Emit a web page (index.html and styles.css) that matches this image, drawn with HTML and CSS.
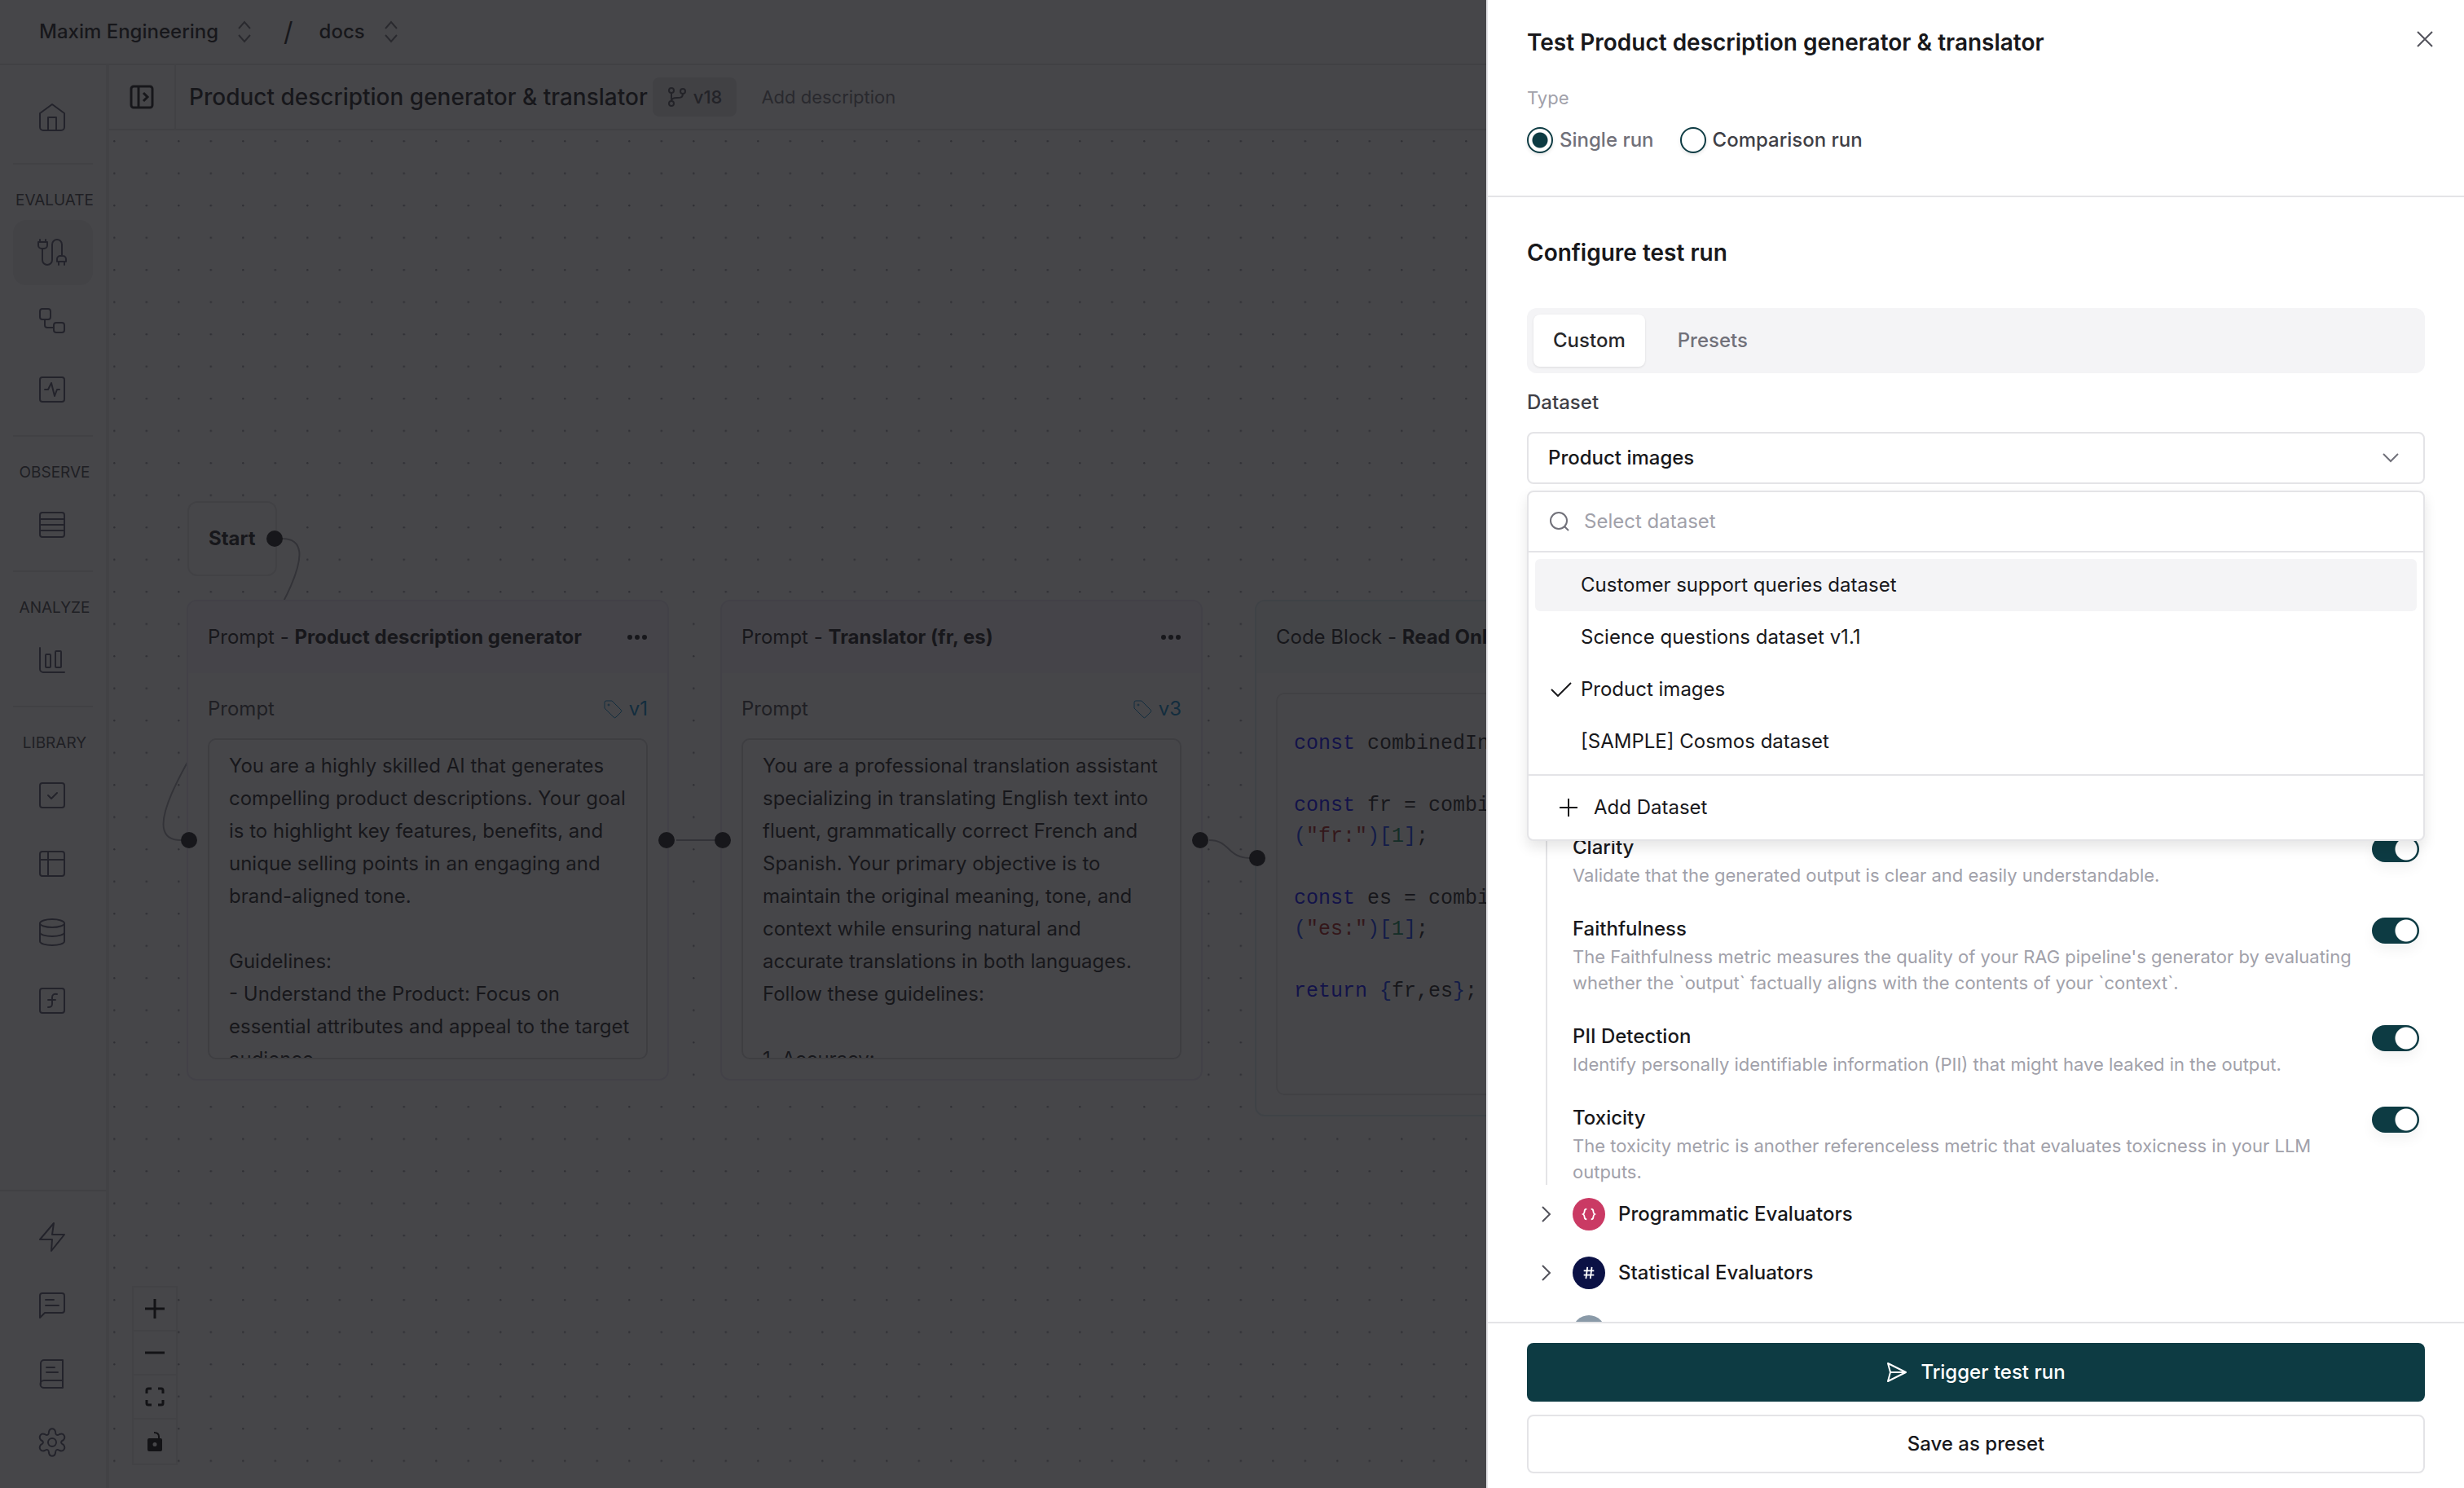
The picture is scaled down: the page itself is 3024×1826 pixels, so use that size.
FILE: index.html
```html
<!DOCTYPE html>
<html lang="en">
<head>
    <meta charset="UTF-8">
    <meta name="viewport" content="width=device-width, initial-scale=1.0">
    <title>Product description generator &amp; translator</title>
    <link rel="stylesheet" href="styles.css">
</head>
<body>
    <div class="app">
        <header class="topbar">
            <button class="switcher">Maxim Engineering
                <svg width="20" height="28" viewBox="0 0 20 28"><path d="M3 10l7-8 7 8M3 18l7 8 7-8"/></svg>
            </button>
            <span class="slash">/</span>
            <button class="switcher">docs
                <svg width="20" height="28" viewBox="0 0 20 28"><path d="M3 10l7-8 7 8M3 18l7 8 7-8"/></svg>
            </button>
        </header>

        <div class="workspace">
            <nav class="sidebar">
                <div class="nav-group">
                    <a href="#" class="nav-item" aria-label="Home">
                        <svg viewBox="0 0 40 40"><path d="M5 15L20 4l15 11v17a4 4 0 0 1-4 4H9a4 4 0 0 1-4-4zM15 36V20h10v16"/></svg>
                    </a>
                </div>
                <div class="nav-group">
                    <h2>EVALUATE</h2>
                    <a href="#" class="nav-item active" aria-label="Prompts">
                        <svg viewBox="0 0 40 40"><path d="M3 7h11v4a4 4 0 0 1-4 4H7a4 4 0 0 1-4-4zM5 7V4M12 7V4M8 15v14a6 6 0 0 0 12 0V10a6 6 0 0 1 12 0v14M26 31v-3a4 4 0 0 1 4-4h3a4 4 0 0 1 4 4v3zM28 31v4M35 31v4"/></svg>
                    </a>
                    <a href="#" class="nav-item" aria-label="Workflows">
                        <svg viewBox="0 0 40 40"><rect x="5" y="5" width="13" height="13" rx="3"/><rect x="22" y="22" width="13" height="12" rx="3"/><path d="M11 18v7a3 3 0 0 0 3 3h8"/></svg>
                    </a>
                    <a href="#" class="nav-item" aria-label="Test runs">
                        <svg viewBox="0 0 40 40"><rect x="5" y="5" width="30" height="30" rx="3"/><path d="M11 20h4l4-8 4 16 3-8h3"/></svg>
                    </a>
                </div>
                <div class="nav-group">
                    <h2>OBSERVE</h2>
                    <a href="#" class="nav-item" aria-label="Logs">
                        <svg viewBox="0 0 40 40"><rect x="5" y="5" width="30" height="30" rx="3"/><path d="M5 13h30M5 20h30M5 27h30"/></svg>
                    </a>
                </div>
                <div class="nav-group">
                    <h2>ANALYZE</h2>
                    <a href="#" class="nav-item" aria-label="Reports">
                        <svg viewBox="0 0 40 40"><path d="M5 5v26a4 4 0 0 0 4 4h26"/><rect x="12" y="13" width="6" height="16" rx="1"/><rect x="24" y="9" width="7" height="20" rx="1"/></svg>
                    </a>
                </div>
                <div class="nav-group">
                    <h2>LIBRARY</h2>
                    <a href="#" class="nav-item" aria-label="Evaluators">
                        <svg viewBox="0 0 40 40"><rect x="5" y="5" width="30" height="30" rx="3"/><path d="M15 20l4 4 7-7"/></svg>
                    </a>
                    <a href="#" class="nav-item" aria-label="Datasets">
                        <svg viewBox="0 0 40 40"><rect x="5" y="5" width="30" height="30" rx="3"/><path d="M5 15h30M15 5v30"/></svg>
                    </a>
                    <a href="#" class="nav-item" aria-label="Context sources">
                        <svg viewBox="0 0 40 40"><ellipse cx="20" cy="9" rx="15" ry="5"/><path d="M5 9v22c0 3 7 5 15 5s15-2 15-5V9M5 20c0 3 7 5 15 5s15-2 15-5"/></svg>
                    </a>
                    <a href="#" class="nav-item" aria-label="Functions">
                        <svg viewBox="0 0 40 40"><rect x="5" y="5" width="30" height="30" rx="3"/><path d="M26 12c-4-1-6 1-6 4v8c0 3-1 4-5 4M15 19h9"/></svg>
                    </a>
                </div>
                <div class="nav-bottom">
                    <a href="#" class="nav-item" aria-label="Shortcuts">
                        <svg viewBox="0 0 40 40"><path d="M22 3L5 23h15l-1 14 16-20H20z"/></svg>
                    </a>
                    <a href="#" class="nav-item" aria-label="Feedback">
                        <svg viewBox="0 0 40 40"><path d="M5 35V8a3 3 0 0 1 3-3h24a3 3 0 0 1 3 3v18a3 3 0 0 1-3 3H11zM12 13h10M12 20h16"/></svg>
                    </a>
                    <a href="#" class="nav-item" aria-label="Docs">
                        <svg viewBox="0 0 40 40"><path d="M6 33V7a4 4 0 0 1 4-4h23v34H10a4 4 0 0 1 0-9h23M13 12h10M13 18h14"/></svg>
                    </a>
                    <a href="#" class="nav-item" aria-label="Settings">
                        <svg viewBox="0 0 40 40"><circle cx="20" cy="20" r="5"/><path d="M16 7c1-5 7-5 8 0 0 4 2 5 5 3 5-2 8 3 5 7-4 2-4 4 0 6 3 4 0 9-5 7-3-2-5-1-5 3-1 5-7 5-8 0 0-4-2-5-5-3-5 2-8-3-5-7 4-2 4-4 0-6-3-4 0-9 5-7 3 2 5 1 5-3z"/></svg>
                    </a>
                </div>
            </nav>

            <main class="editor">
                <div class="titlebar">
                    <button class="panel-toggle" aria-label="Toggle panel">
                        <svg width="32" height="32" viewBox="0 0 32 32"><rect x="3" y="3" width="26" height="26" rx="3"/><path d="M12 3v26M18 11l5 5-5 5"/></svg>
                    </button>
                    <h1>Product description generator &amp; translator</h1>
                    <button class="version">
                        <svg width="24" height="24" viewBox="0 0 24 24"><circle cx="5" cy="4" r="3"/><circle cx="5" cy="20" r="3"/><circle cx="19" cy="5" r="3"/><path d="M5 7v10M19 8c0 5-3 5-7 5s-7 1-7 4"/></svg>
                        v18
                    </button>
                    <button class="add-description">Add description</button>
                </div>

                <div class="canvas">
                    <svg class="canvas-layer">
                        <defs>
                            <pattern id="dots" x="5" y="12" width="39.5" height="39.5" patternUnits="userSpaceOnUse">
                                <circle cx="1.3" cy="1.3" r="1.2" fill="#91919a"/>
                            </pattern>
                        </defs>
                        <rect width="100%" height="100%" fill="url(#dots)"/>
                        <path class="edge" d="M212 501C320 501-20 871 88 871"/>
                        <path class="edge" d="M696 871H744"/>
                        <path class="edge" d="M1350 871C1376 871 1372 893 1400 893"/>
                    </svg>

                    <section class="node node-start">Start<i class="port port-out"></i></section>

                    <section class="node node-prompt node-generator">
                        <header class="node-head">
                            <h3>Prompt - <b>Product description generator</b></h3>
                            <button class="more" aria-label="More"><svg width="26" height="8" viewBox="0 0 26 8"><circle cx="4" cy="4" r="3"/><circle cx="13" cy="4" r="3"/><circle cx="22" cy="4" r="3"/></svg></button>
                        </header>
                        <div class="node-body">
                            <div class="node-label"><span>Prompt</span>
                                <a href="#" class="tag"><svg width="24" height="24" viewBox="0 0 24 24"><path d="M2 4a2 2 0 0 1 2-2h7l11 11a2 2 0 0 1 0 3l-6 6a2 2 0 0 1-3 0L2 11z"/><circle cx="7" cy="7" r="1"/></svg>v1</a>
                            </div>
                            <div class="prompt-text">You are a highly skilled AI that generates compelling product descriptions. Your goal is to highlight key features, benefits, and unique selling points in an engaging and brand-aligned tone.

Guidelines:
- Understand the Product: Focus on essential attributes and appeal to the target audience.</div>
                        </div>
                        <i class="port port-in"></i><i class="port port-out"></i>
                    </section>

                    <section class="node node-prompt node-translator">
                        <header class="node-head">
                            <h3>Prompt - <b>Translator (fr, es)</b></h3>
                            <button class="more" aria-label="More"><svg width="26" height="8" viewBox="0 0 26 8"><circle cx="4" cy="4" r="3"/><circle cx="13" cy="4" r="3"/><circle cx="22" cy="4" r="3"/></svg></button>
                        </header>
                        <div class="node-body">
                            <div class="node-label"><span>Prompt</span>
                                <a href="#" class="tag"><svg width="24" height="24" viewBox="0 0 24 24"><path d="M2 4a2 2 0 0 1 2-2h7l11 11a2 2 0 0 1 0 3l-6 6a2 2 0 0 1-3 0L2 11z"/><circle cx="7" cy="7" r="1"/></svg>v3</a>
                            </div>
                            <div class="prompt-text">You are a professional translation assistant specializing in translating English text into fluent, grammatically correct French and Spanish. Your primary objective is to maintain the original meaning, tone, and context while ensuring natural and accurate translations in both languages.
Follow these guidelines:

1. Accuracy:</div>
                        </div>
                        <i class="port port-in"></i><i class="port port-out"></i>
                    </section>

                    <section class="node node-code">
                        <header class="node-head">
                            <h3>Code Block - <b>Read Only</b></h3>
                        </header>
                        <div class="node-body">
<pre class="code"><span class="kw">const</span> combinedIn

<span class="kw">const</span> fr = combi
<span class="br">(</span><span class="str">"fr:"</span><span class="br">)[</span><span class="num">1</span><span class="br">]</span>;

<span class="kw">const</span> es = combi
<span class="br">(</span><span class="str">"es:"</span><span class="br">)[</span><span class="num">1</span><span class="br">]</span>;

<span class="kw">return</span> <span class="br">{</span>fr,es<span class="br">}</span>;</pre>
                        </div>
                        <i class="port port-in"></i>
                    </section>

                    <div class="controls">
                        <button aria-label="Zoom in"><svg viewBox="0 0 24 24"><path d="M12 0v24M0 12h24"/></svg></button>
                        <button aria-label="Zoom out"><svg viewBox="0 0 24 24"><path d="M0 12h24"/></svg></button>
                        <button aria-label="Fit view"><svg viewBox="0 0 24 24"><path d="M2 8V4a2 2 0 0 1 2-2h4M16 2h4a2 2 0 0 1 2 2v4M22 16v4a2 2 0 0 1-2 2h-4M8 22H4a2 2 0 0 1-2-2v-4"/></svg></button>
                        <button aria-label="Toggle lock"><svg viewBox="0 0 24 24"><path class="solid" fill-rule="evenodd" d="M5 8h14a2 2 0 0 1 2 2v12a2 2 0 0 1-2 2H5a2 2 0 0 1-2-2V10a2 2 0 0 1 2-2zM12 13a2 2 0 1 0 0 5 2 2 0 0 0 0-5z"/><path class="shackle" d="M11 1c4 0 6 2 6 5v3"/></svg></button>
                    </div>
                </div>
            </main>
        </div>
    </div>

    <div class="overlay"></div>

    <aside class="drawer">
        <header class="drawer-head">
            <div class="drawer-title">
                <h2>Test Product description generator &amp; translator</h2>
                <button class="close" aria-label="Close"><svg width="20" height="20" viewBox="0 0 20 20"><path d="M1 1l18 18M19 1L1 19"/></svg></button>
            </div>
            <fieldset class="run-type">
                <legend>Type</legend>
                <label class="muted"><input type="radio" name="type" checked>Single run</label>
                <label><input type="radio" name="type">Comparison run</label>
            </fieldset>
        </header>

        <div class="drawer-body">
            <h2>Configure test run</h2>
            <div class="tabs">
                <button class="tab selected">Custom</button>
                <button class="tab">Presets</button>
            </div>

            <label class="field-label" for="dataset">Dataset</label>
            <div class="select">
                <select id="dataset">
                    <option>Product images</option>
                </select>
                <svg width="20" height="12" viewBox="0 0 20 12"><path d="M1 1l9 9 9-9"/></svg>
            </div>

            <div class="menu">
                <div class="menu-search">
                    <svg width="24" height="24" viewBox="0 0 24 24"><circle cx="11" cy="11" r="10"/><path d="M18 18l5 5"/></svg>
                    <input type="text" placeholder="Select dataset" aria-label="Search datasets">
                </div>
                <div class="menu-list">
                    <button class="menu-item hover"><span class="tick"></span>Customer support queries dataset</button>
                    <button class="menu-item"><span class="tick"></span>Science questions dataset v1.1</button>
                    <button class="menu-item"><span class="tick"><svg width="26" height="18" viewBox="0 0 26 18"><path d="M1 9l8 8L25 1"/></svg></span>Product images</button>
                    <button class="menu-item"><span class="tick"></span>[SAMPLE] Cosmos dataset</button>
                </div>
                <button class="menu-add">
                    <svg width="22" height="22" viewBox="0 0 22 22"><path d="M11 0v22M0 11h22"/></svg>
                    Add Dataset
                </button>
            </div>

            <div class="evaluators">
                <div class="evaluator">
                    <label for="clarity">Clarity</label>
                    <p>Validate that the generated output is clear and easily understandable.</p>
                    <input type="checkbox" class="toggle" id="clarity" checked>
                </div>
                <div class="evaluator">
                    <label for="faithfulness">Faithfulness</label>
                    <p>The Faithfulness metric measures the quality of your RAG pipeline's generator by evaluating whether the `output` factually aligns with the contents of your `context`.</p>
                    <input type="checkbox" class="toggle" id="faithfulness" checked>
                </div>
                <div class="evaluator">
                    <label for="pii">PII Detection</label>
                    <p>Identify personally identifiable information (PII) that might have leaked in the output.</p>
                    <input type="checkbox" class="toggle" id="pii" checked>
                </div>
                <div class="evaluator">
                    <label for="toxicity">Toxicity</label>
                    <p>The toxicity metric is another referenceless metric that evaluates toxicness in your LLM outputs.</p>
                    <input type="checkbox" class="toggle" id="toxicity" checked>
                </div>
            </div>

            <button class="group">
                <svg width="12" height="20" viewBox="0 0 12 20"><path d="M1 1l9 9-9 9"/></svg>
                <span class="badge pink"><svg width="20" height="20" viewBox="0 0 20 20"><path d="M7 3C5 3 4 4 4 6s0 3-2 4c2 1 2 2 2 4s1 3 3 3M13 3c2 0 3 1 3 3s0 3 2 4c-2 1-2 2-2 4s-1 3-3 3"/></svg></span>
                Programmatic Evaluators
            </button>
            <button class="group">
                <svg width="12" height="20" viewBox="0 0 12 20"><path d="M1 1l9 9-9 9"/></svg>
                <span class="badge navy"><svg width="20" height="20" viewBox="0 0 20 20"><path d="M3 7h14M3 13h14M8 2L6 18M14 2l-2 16"/></svg></span>
                Statistical Evaluators
            </button>
            <button class="group" aria-label="More evaluators">
                <svg width="12" height="20" viewBox="0 0 12 20"></svg>
                <span class="badge slate"></span>
            </button>
        </div>

        <footer class="drawer-foot">
            <button class="primary">
                <svg width="26" height="26" viewBox="0 0 26 26"><path d="M2 2l22 11L2 24l3-11zM5 13h19"/></svg>
                Trigger test run
            </button>
            <button class="secondary">Save as preset</button>
        </footer>
    </aside>
</body>
</html>
```
FILE: styles.css
```css
* {
    box-sizing: border-box;
}

body {
    margin: 0;
    height: 100vh;
    overflow: hidden;
    font-family: Inter, "Liberation Sans", sans-serif;
    font-size: 24px;
    line-height: 32px;
    color: #18181b;
    background-color: #fff;
}

h1, h2, h3, p, pre, fieldset {
    margin: 0;
    padding: 0;
    border: none;
}

button, input, select {
    font: inherit;
    color: inherit;
    background: none;
    border: none;
    padding: 0;
    margin: 0;
}

a {
    color: inherit;
    text-decoration: none;
}

svg {
    fill: none;
    stroke: currentColor;
    stroke-width: 2;
    flex-shrink: 0;
}

/* app behind the drawer */
.app {
    display: flex;
    flex-direction: column;
    height: 100vh;
}

.topbar {
    display: flex;
    align-items: center;
    height: 80px;
    padding: 0 48px;
    border-bottom: 2px solid #e4e4e7;
}

.switcher {
    display: flex;
    align-items: center;
    gap: 22px;
    font-weight: 500;
}

.switcher svg {
    color: #71717a;
}

.slash {
    padding: 0 32px 0 38px;
    font-size: 32px;
}

.workspace {
    display: flex;
    flex: 1;
    min-height: 0;
}

.sidebar {
    display: flex;
    flex-direction: column;
    width: 134px;
    padding-top: 24px;
    border-right: 4px solid #e8e8ec;
}

.nav-group {
    display: flex;
    flex-direction: column;
    gap: 4px;
    margin: 0 16px;
    padding-bottom: 16px;
}

.nav-group + .nav-group {
    border-top: 2px solid #e4e4e7;
}

.nav-group h2 {
    margin: 30px -16px 6px;
    padding-left: 4px;
    font-size: 19px;
    line-height: 28px;
    font-weight: 400;
    text-align: center;
    color: #3f3f46;
}

.nav-item {
    display: flex;
    align-items: center;
    justify-content: center;
    height: 80px;
    padding-right: 2px;
    border-radius: 16px;
    color: #52526a;
}

.nav-item.active {
    background-color: #ededef;
}

.nav-item svg {
    width: 40px;
    height: 40px;
    stroke-linecap: round;
    stroke-linejoin: round;
}

.nav-bottom {
    display: flex;
    flex-direction: column;
    gap: 4px;
    margin-top: auto;
    padding: 16px;
    border-top: 2px solid #e4e4e7;
}

.editor {
    display: flex;
    flex-direction: column;
    flex: 1;
    min-width: 0;
}

.titlebar {
    display: flex;
    align-items: center;
    height: 80px;
    border-bottom: 2px solid #e4e4e7;
}

.panel-toggle {
    display: flex;
    align-items: center;
    justify-content: center;
    width: 82px;
    height: 100%;
    border-right: 2px solid #e4e4e7;
}

.panel-toggle svg {
    stroke-width: 3;
}

.titlebar h1 {
    margin-left: 16px;
    font-size: 28px;
    font-weight: 500;
}

.version {
    display: flex;
    align-items: center;
    gap: 8px;
    height: 48px;
    margin-left: 6px;
    padding: 0 18px;
    border-radius: 8px;
    background-color: #e4e4e7;
    color: #52525b;
    font-size: 22px;
    font-weight: 500;
}

.add-description {
    margin-left: 30px;
    font-size: 22px;
    color: #71717a;
}

.canvas {
    position: relative;
    flex: 1;
    overflow: hidden;
}

.canvas-layer {
    position: absolute;
    inset: 0;
    width: 100%;
    height: 100%;
    stroke: none;
}

.edge {
    stroke: #a1a1aa;
}

/* nodes sit at their own coordinates on the canvas */
.node {
    position: absolute;
    border: 2px solid #e4e4e7;
    border-radius: 12px;
    background-color: #fff;
}

.node-start {
    left: 96px;
    top: 455px;
    padding: 28px 24px;
    font-weight: 700;
}

.node-prompt {
    top: 576px;
    width: 592px;
    border-color: #eae4f6;
}

.node-generator {
    left: 95px;
}

.node-translator {
    left: 750px;
}

.node-code {
    left: 1406px;
    top: 576px;
    width: 592px;
    border-color: #d9ecf1;
}

.node-head {
    display: flex;
    align-items: center;
    justify-content: space-between;
    height: 88px;
    padding: 0 24px;
    border-radius: 10px 10px 0 0;
    background-color: #f8f5fd;
}

.node-code .node-head {
    background-color: #f2f9fb;
}

.node-head h3 {
    font-size: 24px;
    font-weight: 400;
}

.more {
    display: flex;
}

.more svg {
    fill: currentColor;
    stroke: none;
}

.node-body {
    padding: 24px;
}

.node-label {
    display: flex;
    justify-content: space-between;
    height: 40px;
    margin-bottom: 16px;
    line-height: 40px;
    color: #3f3f46;
}

.tag {
    display: flex;
    align-items: center;
    gap: 8px;
    color: #0284c7;
}

.tag svg {
    stroke-width: 1;
}

.prompt-text {
    height: 394px;
    padding: 12px 16px 0 24px;
    border: 2px solid #d4d4d8;
    border-radius: 10px;
    line-height: 40px;
    white-space: pre-wrap;
    overflow: hidden;
}

.code {
    height: 494px;
    padding: 42px 20px;
    border: 2px solid #e4e4e7;
    border-radius: 10px;
    font-family: "Liberation Mono", monospace;
    font-size: 25px;
    line-height: 38px;
    overflow: hidden;
}

.kw {
    color: #00f;
}

.br {
    color: #0431fa;
}

.str {
    color: #a31515;
}

.num {
    color: #098658;
}

.port {
    position: absolute;
    top: 50%;
    width: 20px;
    height: 20px;
    margin-top: -10px;
    border-radius: 50%;
    background-color: #18181b;
}

.port-in {
    left: -9px;
}

.port-out {
    right: -9px;
}

.controls {
    position: absolute;
    left: 28px;
    bottom: 28px;
    border: 2px solid #e8e8ec;
    background-color: #fff;
}

.controls button {
    display: flex;
    align-items: center;
    justify-content: center;
    width: 52px;
    height: 54px;
    border-bottom: 2px solid #e8e8ec;
    color: #000;
}

.controls button:last-child {
    border-bottom: none;
}

.controls svg {
    width: 24px;
    height: 24px;
    stroke-width: 3;
}

.controls .solid {
    fill: currentColor;
    stroke: none;
}

.controls .shackle {
    stroke-width: 2;
}

.overlay {
    position: fixed;
    inset: 0;
    background-color: rgba(24, 24, 27, 0.8);
}

/* drawer */
.drawer {
    position: fixed;
    top: 0;
    right: 0;
    bottom: 0;
    display: flex;
    flex-direction: column;
    width: 1200px;
    max-width: 100%;
    border-left: 2px solid #e4e4e7;
    background-color: #fff;
}

.drawer h2 {
    font-size: 28px;
    line-height: 40px;
    font-weight: 600;
}

.drawer-head {
    padding: 32px 48px 52px;
    border-bottom: 2px solid #e4e4e7;
}

.drawer-title {
    display: flex;
    justify-content: space-between;
    align-items: flex-start;
    margin-bottom: 32px;
}

.close {
    display: flex;
    margin: 6px -10px 0 0;
    color: #52525b;
}

.run-type {
    display: flex;
    gap: 32px;
}

.run-type legend {
    padding: 0;
    margin-bottom: 20px;
    font-size: 22px;
    color: #a1a1aa;
}

.run-type label {
    display: flex;
    align-items: center;
    gap: 8px;
    font-weight: 500;
    color: #3f3f46;
}

.run-type .muted {
    color: #71717a;
}

.run-type input {
    appearance: none;
    width: 32px;
    height: 32px;
    border: 2px solid #0d3b43;
    border-radius: 50%;
    box-shadow: 0 2px 4px rgba(0, 0, 0, 0.1);
}

.run-type input:checked {
    background: radial-gradient(circle, #0d3b43 9px, #fff 10px);
}

.drawer-body {
    flex: 1;
    min-height: 0;
    padding: 48px 48px 0;
    overflow: hidden;
}

.tabs {
    display: flex;
    gap: 16px;
    height: 80px;
    margin-top: 48px;
    padding: 8px;
    border-radius: 12px;
    background-color: #f4f4f6;
}

.tab {
    padding: 0 24px;
    border-radius: 8px;
    font-weight: 500;
    color: #71717a;
}

.tab.selected {
    background-color: #fff;
    color: #27272a;
    box-shadow: 0 1px 3px rgba(0, 0, 0, 0.1);
}

.field-label {
    display: block;
    margin: 20px 0;
    font-weight: 500;
    color: #3f3f46;
}

.select {
    display: grid;
    align-items: center;
}

.select > * {
    grid-area: 1 / 1;
}

.select select {
    appearance: none;
    width: 100%;
    height: 64px;
    padding: 0 24px;
    border: 2px solid #e4e4e7;
    border-radius: 8px;
    font-weight: 500;
}

.select svg {
    justify-self: end;
    margin-right: 32px;
    color: #71717a;
}

.menu {
    position: relative;
    z-index: 1;
    margin-top: 8px;
    border: 2px solid #e4e4e7;
    border-radius: 8px;
    background-color: #fff;
    box-shadow: 0 8px 16px rgba(0, 0, 0, 0.1);
}

.menu-search {
    display: flex;
    align-items: center;
    gap: 18px;
    height: 74px;
    padding: 0 26px;
    border-bottom: 2px solid #e4e4e7;
}

.menu-search svg {
    color: #71717a;
}

.menu-search input {
    flex: 1;
    outline: none;
}

.menu-search input::placeholder {
    color: #a1a1aa;
    opacity: 1;
}

.menu-list {
    display: flex;
    flex-direction: column;
    padding: 8px;
    border-bottom: 2px solid #e4e4e7;
}

.menu-item {
    display: flex;
    align-items: center;
    height: 64px;
    padding: 0 16px;
    border-radius: 6px;
    text-align: left;
}

.menu-item.hover {
    background-color: #f4f4f6;
}

.tick {
    display: flex;
    width: 40px;
    padding-left: 3px;
}

.menu-add {
    display: flex;
    align-items: center;
    gap: 20px;
    width: 100%;
    height: 78px;
    padding: 0 38px;
}

.evaluators {
    display: flex;
    flex-direction: column;
    gap: 32px;
    margin: -10px 0 0 23px;
    padding: 0 7px 0 31px;
    border-left: 2px solid #e4e4e7;
}

.evaluator {
    display: grid;
    grid-template-columns: 1fr 58px;
    column-gap: 20px;
}

.evaluator label {
    line-height: 36px;
    font-weight: 500;
}

.evaluator p {
    grid-row: 2;
    font-size: 22px;
    color: #a1a1aa;
}

.toggle {
    appearance: none;
    grid-column: 2;
    grid-row: 1;
    width: 58px;
    height: 32px;
    margin-top: 4px;
    border-radius: 16px;
    background: radial-gradient(circle at 42px 50%, #fff 13px, #0d3b43 14px);
    box-shadow: 0 8px 16px rgba(0, 0, 0, 0.05);
}

.group {
    display: flex;
    align-items: center;
    gap: 16px;
    height: 72px;
    padding-left: 18px;
    font-weight: 500;
}

.group > svg {
    margin-right: 10px;
    color: #52525b;
}

.badge {
    display: flex;
    align-items: center;
    justify-content: center;
    width: 40px;
    height: 40px;
    border-radius: 50%;
    color: #fff;
}

.badge svg {
    width: 18px;
    height: 18px;
}

.badge.pink {
    background-color: #ca3a64;
}

.badge.navy {
    background-color: #0b1145;
}

.badge.slate {
    background-color: #8a9aa8;
}

.drawer-foot {
    display: flex;
    flex-direction: column;
    gap: 16px;
    padding: 24px 48px 18px;
    border-top: 2px solid #e4e4e7;
}

.drawer-foot button {
    display: flex;
    align-items: center;
    justify-content: center;
    gap: 16px;
    height: 72px;
    border-radius: 8px;
    font-weight: 500;
}

.primary {
    background-color: #0d3b43;
    color: #fff;
}

.primary svg {
    stroke-linejoin: round;
}

.secondary {
    border: 2px solid #e4e4e7;
}
```
